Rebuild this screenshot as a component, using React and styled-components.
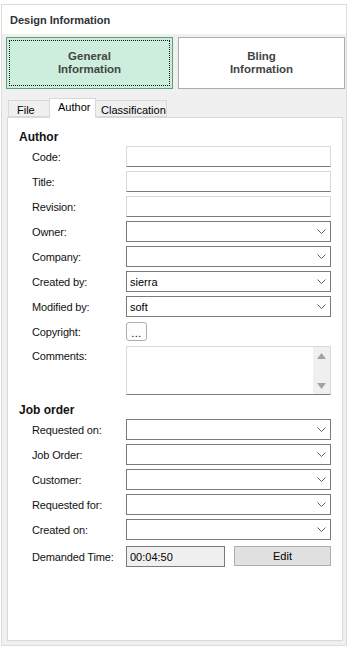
import React from 'react';
import styled, { createGlobalStyle } from 'styled-components';

const GlobalStyle = createGlobalStyle`
    html, body {
        margin: 0;
        padding: 0;
        background: #ffffff;
    }
    body {
        font-family: "Liberation Sans", Arial, sans-serif;
        font-size: 11px;
        color: #000000;
    }
`;

const Page = styled.div`
    box-sizing: border-box;
    width: 352px;
    height: 648px;
    padding: 4px 5px 2px 1px;
`;

const Frame = styled.div`
    box-sizing: border-box;
    height: 100%;
    display: flex;
    flex-direction: column;
    border: 1px solid #dcdcdc;
    background: #f0f0f0;
`;

const Header = styled.div`
    height: 29px;
    display: flex;
    align-items: center;
    padding-left: 8px;
    background: #ffffff;
    font-weight: 700;
    font-size: 11px;
    color: #2e3338;
`;

const ModeRow = styled.div`
    display: grid;
    grid-template-columns: 1fr 1fr;
    gap: 5px;
    padding: 3px 1px 0 4px;
`;

const ModeButton = styled.div`
    box-sizing: border-box;
    height: 52px;
    position: relative;
    display: flex;
    align-items: center;
    justify-content: center;
    text-align: center;
    font-weight: 700;
    font-size: 11.5px;
    line-height: 13px;
    color: #444444;
    background: ${(p) => (p.$active ? '#cdeedd' : '#ffffff')};
    border: 1px solid ${(p) => (p.$active ? '#5f9f78' : '#adadad')};
    &::after {
        content: '';
        display: ${(p) => (p.$active ? 'block' : 'none')};
        position: absolute;
        inset: 2px;
        border: 1px dotted #111111;
    }
`;

const TabStrip = styled.div`
    display: flex;
    align-items: flex-end;
    margin: 9px 0 0 6px;
    height: 19px;
    position: relative;
    z-index: 1;
`;

const Tab = styled.div`
    box-sizing: border-box;
    width: ${(p) => p.$width}px;
    height: ${(p) => (p.$selected ? '20px' : '17px')};
    margin-bottom: ${(p) => (p.$selected ? '-1px' : '0')};
    padding-left: ${(p) => p.$pad}px;
    display: flex;
    align-items: ${(p) => (p.$selected ? 'flex-start' : 'center')};
    padding-top: ${(p) => (p.$selected ? '2px' : '3px')};
    background: ${(p) => (p.$selected ? '#ffffff' : '#f0f0f0')};
    border: 1px solid #d9d9d9;
    border-bottom: ${(p) => (p.$selected ? 'none' : '1px solid #d9d9d9')};
    margin-left: ${(p) => (p.$first ? '0' : '-1px')};
    font-size: 11px;
    color: #000000;
`;

const Panel = styled.div`
    box-sizing: border-box;
    flex: 1;
    margin: 0 3px 4px 5px;
    padding: 12px 11px 0 11px;
    background: #ffffff;
    border: 1px solid #d9d9d9;
    display: flex;
    flex-direction: column;
`;

const Section = styled.div`
    font-weight: 700;
    font-size: 12px;
    line-height: 15px;
    color: #111111;
    margin-top: ${(p) => p.$top || 0}px;
    margin-bottom: 1px;
`;

const Row = styled.div`
    display: flex;
    align-items: ${(p) => (p.$top ? 'flex-start' : 'center')};
    min-height: 21px;
    margin-top: ${(p) => p.$gap || 0}px;
    margin-bottom: 4px;
    padding-left: 13px;
`;

const Label = styled.div`
    width: 94px;
    flex: none;
    font-size: 11px;
    letter-spacing: -0.15px;
    color: #111111;
    padding-top: ${(p) => (p.$top ? '4px' : '0')};
`;

const TextBox = styled.div`
    box-sizing: border-box;
    flex: 1;
    height: 21px;
    background: #ffffff;
    border: 1px solid #d9d9d9;
    border-bottom-color: #7a7a7a;
`;

const Combo = styled.div`
    box-sizing: border-box;
    flex: 1;
    height: 21px;
    display: flex;
    align-items: center;
    justify-content: space-between;
    padding: 0 4px 0 3px;
    background: #ffffff;
    border: 1px solid #7a7a7a;
    font-size: 11px;
    color: #000000;
`;

const Chevron = () => (
    <svg width="9" height="6" viewBox="0 0 9 6">
        <path d="M0.5 0.5 L4.5 4.5 L8.5 0.5" fill="none" stroke="#606060" strokeWidth="1" />
    </svg>
);

const SmallButton = styled.div`
    box-sizing: border-box;
    width: 21px;
    height: 19px;
    display: flex;
    align-items: flex-end;
    justify-content: center;
    padding-bottom: 3px;
    background: #fdfdfd;
    border: 1px solid #adadad;
    border-radius: 3px;
    font-size: 11px;
    line-height: 8px;
    letter-spacing: 0.5px;
`;

const Memo = styled.div`
    box-sizing: border-box;
    flex: 1;
    height: 49px;
    display: flex;
    justify-content: flex-end;
    background: #ffffff;
    border: 1px solid #d9d9d9;
    border-bottom-color: #7a7a7a;
`;

const ScrollTrack = styled.div`
    width: 17px;
    display: flex;
    flex-direction: column;
    justify-content: space-between;
    align-items: center;
    padding: 6px 0 5px;
    background: #f0f0f0;
`;

const Arrow = ({ down }) => (
    <svg width="9" height="6" viewBox="0 0 9 6">
        <path d={down ? 'M0 0 H9 L4.5 6 Z' : 'M0 6 H9 L4.5 0 Z'} fill="#a3a3a3" />
    </svg>
);

const TimeRow = styled.div`
    flex: 1;
    display: flex;
    gap: 9px;
`;

const TimeField = styled.div`
    box-sizing: border-box;
    width: 99px;
    height: 21px;
    display: flex;
    align-items: center;
    padding-left: 3px;
    background: #f0f0f0;
    border: 1px solid #7a7a7a;
    font-size: 11px;
`;

const EditButton = styled.div`
    box-sizing: border-box;
    flex: 1;
    height: 20px;
    display: flex;
    align-items: center;
    justify-content: center;
    background: #e1e1e1;
    border: 1px solid #adadad;
    font-size: 11px;
`;

function ComboRow({ label, value }) {
    return (
        <Row>
            <Label>{label}</Label>
            <Combo>
                <span>{value}</span>
                <Chevron />
            </Combo>
        </Row>
    );
}

function TextRow({ label }) {
    return (
        <Row>
            <Label>{label}</Label>
            <TextBox />
        </Row>
    );
}

export default function App() {
    return (
        <Page>
            <GlobalStyle />
            <Frame>
                <Header>Design Information</Header>
                <ModeRow>
                    <ModeButton $active>
                        General
                        <br />
                        Information
                    </ModeButton>
                    <ModeButton>
                        Bling
                        <br />
                        Information
                    </ModeButton>
                </ModeRow>
                <TabStrip>
                    <Tab $first $width={42} $pad={8}>File</Tab>
                    <Tab $selected $width={47} $pad={8}>Author</Tab>
                    <Tab $width={72} $pad={5}>Classification</Tab>
                </TabStrip>
                <Panel>
                    <Section>Author</Section>
                    <TextRow label="Code:" />
                    <TextRow label="Title:" />
                    <TextRow label="Revision:" />
                    <ComboRow label="Owner:" value="" />
                    <ComboRow label="Company:" value="" />
                    <ComboRow label="Created by:" value="sierra" />
                    <ComboRow label="Modified by:" value="soft" />
                    <Row>
                        <Label>Copyright:</Label>
                        <SmallButton>...</SmallButton>
                    </Row>
                    <Row $top>
                        <Label $top>Comments:</Label>
                        <Memo>
                            <ScrollTrack>
                                <Arrow />
                                <Arrow down />
                            </ScrollTrack>
                        </Memo>
                    </Row>
                    <Section $top={4}>Job order</Section>
                    <ComboRow label="Requested on:" value="" />
                    <ComboRow label="Job Order:" value="" />
                    <ComboRow label="Customer:" value="" />
                    <ComboRow label="Requested for:" value="" />
                    <ComboRow label="Created on:" value="" />
                    <Row $gap={2}>
                        <Label>Demanded Time:</Label>
                        <TimeRow>
                            <TimeField>00:04:50</TimeField>
                            <EditButton>Edit</EditButton>
                        </TimeRow>
                    </Row>
                </Panel>
            </Frame>
        </Page>
    );
}
